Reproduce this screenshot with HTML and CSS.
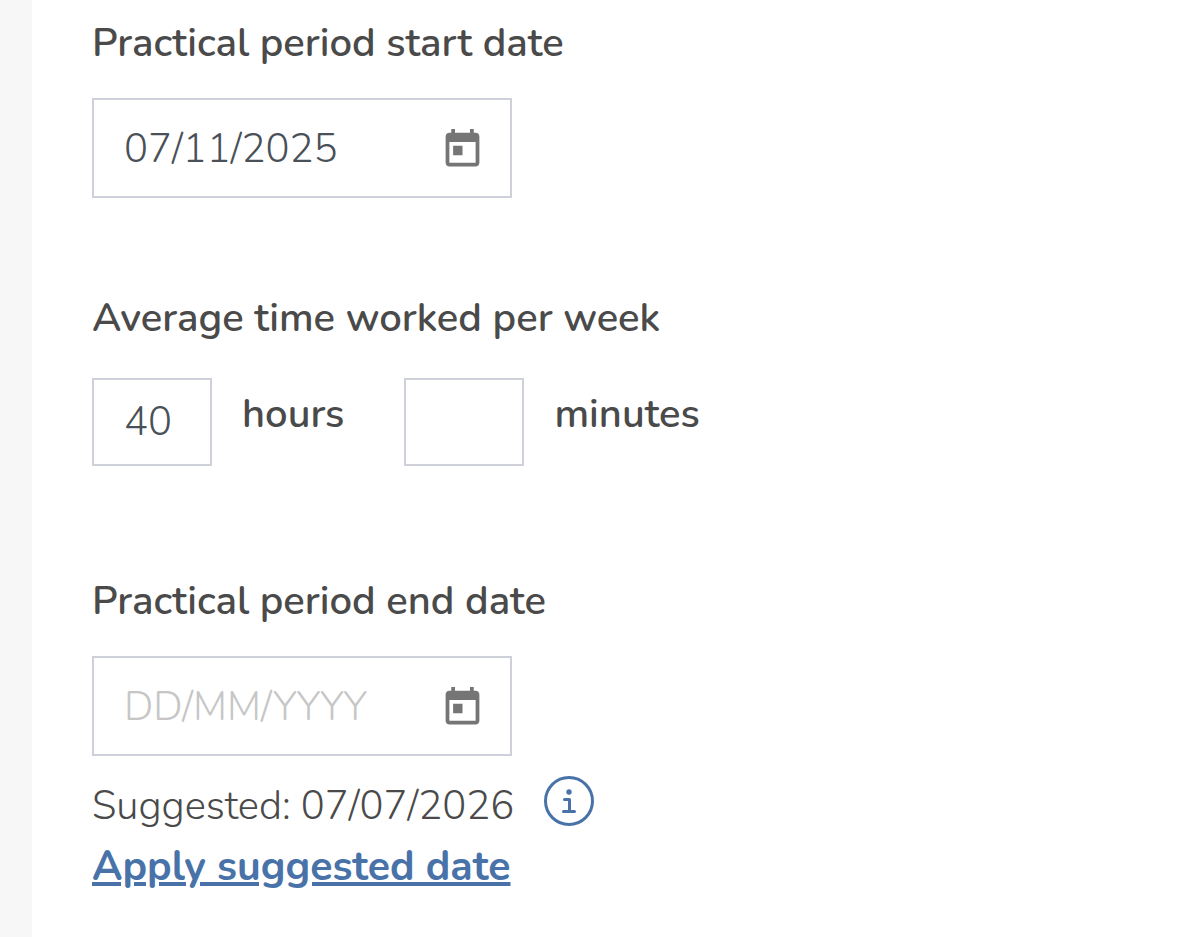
FILE: index.html
```
<!DOCTYPE html>
<html lang="en">

<head>
	<meta charset="UTF-8">
	<meta name="viewport" content="width=device-width, initial-scale=1">
	<title>Practical period</title>
	<link rel="stylesheet" href="styles.css">
</head>

<body>

	<form class="panel">

		<div class="field">
			<label class="title" for="startDate">Practical period start date</label>
			<div class="date-box">
				<input type="text" id="startDate" class="date-input" value="07/11/2025" placeholder="DD/MM/YYYY">
				<button type="button" class="icon-btn" aria-label="Choose start date">
					<svg class="calendar-icon" viewBox="0 0 24 24">
						<path d="M19 3h-1V1h-2v2H8V1H6v2H5c-1.11 0-2 .9-2 2v14c0 1.1.89 2 2 2h14c1.1 0 2-.9 2-2V5c0-1.1-.9-2-2-2zm0 16H5V8h14v11zM7 10h5v5H7z"/>
					</svg>
				</button>
			</div>
		</div>

		<fieldset class="field time-field">
			<legend class="title">Average time worked per week</legend>
			<div class="time-row">
				<div class="time-part">
					<input type="text" id="hours" class="time-input" value="40">
					<label class="unit" for="hours">hours</label>
				</div>
				<div class="time-part">
					<input type="text" id="minutes" class="time-input">
					<label class="unit" for="minutes">minutes</label>
				</div>
			</div>
		</fieldset>

		<div class="field">
			<label class="title" for="endDate">Practical period end date</label>
			<div class="date-box">
				<input type="text" id="endDate" class="date-input" placeholder="DD/MM/YYYY">
				<button type="button" class="icon-btn" aria-label="Choose end date">
					<svg class="calendar-icon" viewBox="0 0 24 24">
						<path d="M19 3h-1V1h-2v2H8V1H6v2H5c-1.11 0-2 .9-2 2v14c0 1.1.89 2 2 2h14c1.1 0 2-.9 2-2V5c0-1.1-.9-2-2-2zm0 16H5V8h14v11zM7 10h5v5H7z"/>
					</svg>
				</button>
			</div>
			<div class="suggested">
				<span>Suggested: 07/07/2026</span>
				<button type="button" class="icon-btn" aria-label="About the suggested date">
					<svg class="info-icon" viewBox="0 0 52 52">
						<circle cx="26" cy="26" r="23.5"/>
						<path d="M21.5 24.5h5v12M20.5 36.5h11"/>
						<circle class="dot" cx="26" cy="17" r="2.7"/>
					</svg>
				</button>
			</div>
			<a class="apply" href="#">Apply suggested date</a>
		</div>

	</form>

</body>

</html>
```

FILE: styles.css
```
* { box-sizing: border-box; }

body {
	margin: 0;
	background-color: #f7f7f7;
	color: #4a4a4a;
	font-family: Nunito, "Open Sans", "Noto Sans", sans-serif;
	font-size: 40px;
	font-weight: 300;
	line-height: 54px;
}

.panel {
	min-height: 100vh;
	margin-left: 32px;
	padding: 16px 60px 40px;
	background-color: #fff;
}

.field {
	margin: 0 0 93px;
	padding: 0;
	border: 0;
}

.field:last-child { margin-bottom: 0; }

.time-field { margin-bottom: 108px; }

.title {
	display: block;
	margin-bottom: 28px;
	padding: 0;
	font-weight: 600;
}

.time-field .title { margin-bottom: 33px; }

input {
	border: 2px solid #ced1da;
	background-color: #fff;
	color: #495057;
	font: inherit;
}

input::placeholder {
	color: #c6c6c6;
	opacity: 1;
}

.date-box {
	display: flex;
	align-items: center;
	width: 420px;
	max-width: 100%;
	height: 100px;
	padding: 2px 25px 0 30px;
	border: 2px solid #ced1da;
}

.date-input {
	flex: 1;
	min-width: 0;
	padding: 0;
	border: 0;
}

.icon-btn {
	display: flex;
	padding: 0;
	border: 0;
	background: none;
	cursor: pointer;
}

.calendar-icon {
	width: 45px;
	height: 45px;
	fill: #757575;
}

.time-row {
	display: flex;
	flex-wrap: wrap;
	gap: 60px;
}

.time-part {
	display: flex;
	gap: 30px;
}

.time-input {
	width: 120px;
	height: 88px;
	padding: 0 30px;
}

.unit {
	margin-top: 9px;
	font-weight: 600;
}

.suggested {
	display: flex;
	align-items: flex-start;
	gap: 29px;
	margin-top: 19px;
	line-height: 62px;
}

.info-icon {
	width: 52px;
	height: 52px;
	fill: none;
	stroke: #4872a8;
	stroke-width: 3;
	stroke-linecap: round;
	stroke-linejoin: round;
}

.dot {
	fill: #4872a8;
	stroke: none;
}

.apply {
	color: #4872a8;
	font-size: 41px;
	font-weight: 700;
	line-height: 60px;
	text-decoration-thickness: 4px;
	text-underline-offset: 2px;
}
```
